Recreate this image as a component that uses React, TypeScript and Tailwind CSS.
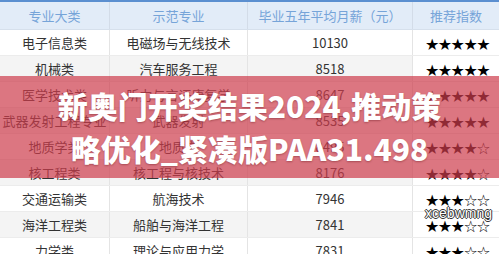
import React from 'react';

interface Row {
  category: string;
  major: string;
  salary: string;
  stars: number;
}

const rows: Row[] = [
  { category: '电子信息类', major: '电磁场与无线技术', salary: '10130', stars: 5 },
  { category: '机械类', major: '汽车服务工程', salary: '8518', stars: 5 },
  { category: '医学技术类', major: '听力与言语康复学', salary: '8647', stars: 5 },
  { category: '武器发射工程专业', major: '武器发射', salary: '8535', stars: 5 },
  { category: '地质学类', major: '地质学', salary: '8495', stars: 4 },
  { category: '核工程类', major: '核工程与核技术', salary: '8176', stars: 4 },
  { category: '交通运输类', major: '航海技术', salary: '7946', stars: 3 },
  { category: '海洋工程类', major: '船舶与海洋工程', salary: '7841', stars: 3 },
  { category: '力学类', major: '理论与应用力学', salary: '7831', stars: 3 },
];

const cols = 'grid grid-cols-[110px_138px_165px_86px]';

function Stars({ count }: { count: number }) {
  return (
    <span className="font-['DejaVu_Sans',sans-serif] text-[16px] tracking-[-1.5px] leading-none text-black pt-[5px] pl-[2px]">
      {'★'.repeat(count) + '☆'.repeat(5 - count)}
    </span>
  );
}

export default function App() {
  return (
    <div className="relative w-[499px] h-[254px] overflow-hidden bg-white font-['Noto_Sans_CJK_SC',sans-serif]">
      <div className="h-[2px] bg-[#5b8fd0]" />

      {/* Header */}
      <div className={`${cols} h-[28px] bg-[#e2ecf8] text-[13px] text-[#76a4d8] border-b border-[#d6e0ec]`}>
        <div className="flex items-center justify-center border-r border-[#d3dce8]">专业大类</div>
        <div className="flex items-center justify-center border-r border-[#d3dce8]">示范专业</div>
        <div className="flex items-center justify-center border-r border-[#d3dce8]">毕业五年平均月薪（元）</div>
        <div className="flex items-center justify-center">推荐指数</div>
      </div>

      {/* Body rows */}
      {rows.map((row, i) => (
        <div
          key={i}
          className={`${cols} h-[26px] text-[13px] text-[#333] border-b border-[#ececec] ${
            i % 2 === 1 ? 'bg-[#f4f4f4]' : 'bg-white'
          }`}
        >
          <div className="flex items-center justify-center border-r border-[#e4e4e4] whitespace-nowrap">{row.category}</div>
          <div className="flex items-center justify-center border-r border-[#e4e4e4] whitespace-nowrap">{row.major}</div>
          <div className="flex items-center justify-center border-r border-[#e4e4e4]">{row.salary}</div>
          <div className="flex items-center justify-center bg-white">
            <Stars count={row.stars} />
          </div>
        </div>
      ))}

      {/* Title overlay band */}
      <div className="absolute left-0 right-0 top-[76px] h-[102px] bg-[rgba(205,60,75,0.7)] flex flex-col items-center justify-center">
        <div className="text-white font-black text-[30px] leading-[43px] whitespace-nowrap [text-shadow:0_1px_2px_rgba(80,0,10,0.35)]">
          新奥门开奖结果2024,推动策
        </div>
        <div className="text-white font-black text-[30px] leading-[43px] whitespace-nowrap [text-shadow:0_1px_2px_rgba(80,0,10,0.35)]">
          略优化_紧凑版PAA31.498
        </div>
      </div>

      {/* Watermark */}
      <div className="absolute right-[7px] top-[206px] text-[14px] leading-none text-white font-['Liberation_Sans',sans-serif] [text-shadow:1px_0_0_#333,-1px_0_0_#333,0_1px_0_#333,0_-1px_0_#333]">
        xcebwmng
      </div>
    </div>
  );
}
